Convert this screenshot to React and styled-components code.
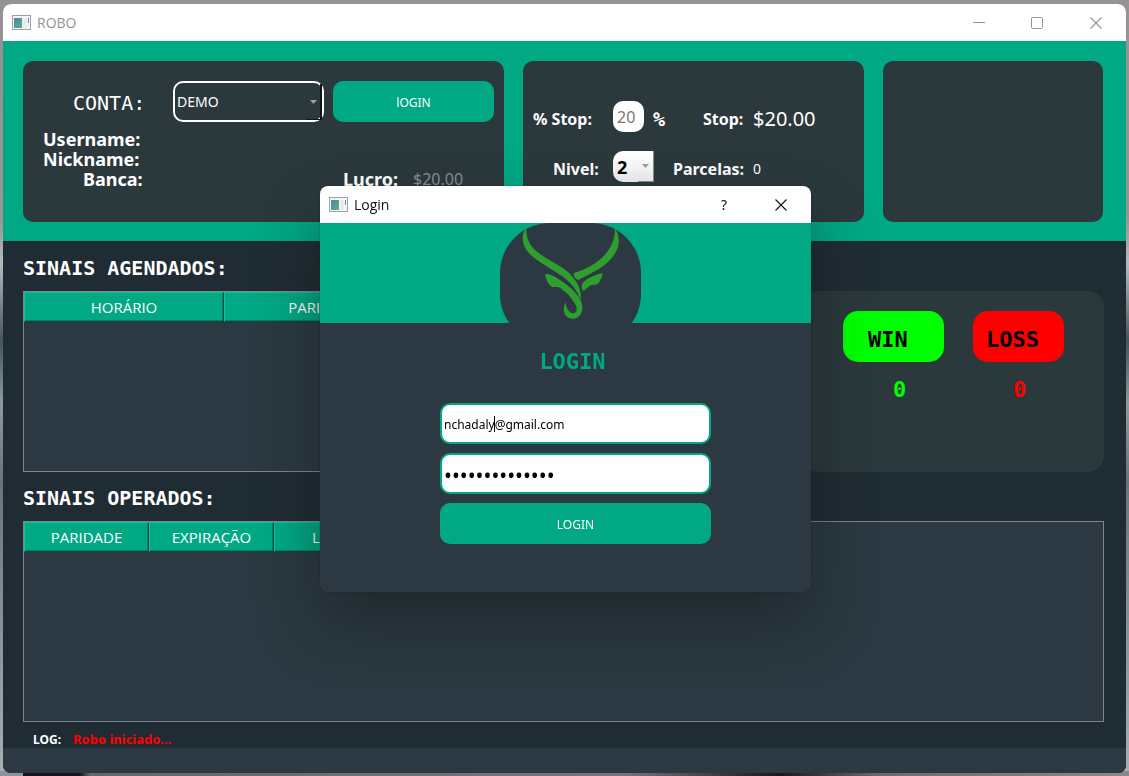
import React from "react";
import styled, { createGlobalStyle, css } from "styled-components";

const green = "#00a884";
const slate = "#2c3942";
const night = "#202c33";
const card = "#2b393d";
const sans = `"Noto Sans", "Open Sans", sans-serif`;
const light = `"Open Sans", "Noto Sans", sans-serif`;
const mono = `"DejaVu Sans Mono", "Liberation Mono", monospace`;

const GlobalStyle = createGlobalStyle`
  *, *::before, *::after { box-sizing: border-box; }
  html, body { height: 100%; }
  body {
    margin: 0;
    color: #fff;
    font-family: ${sans};
    background:
      linear-gradient(90deg, #8e9495 0, #8e9495 2%, #15121a 2%, #15121a 7%, #666 8%, #77757a 55%, #1a1818 69%, #6c6a6a 78%, #8c8888 100%) bottom / 100% 5px no-repeat,
      linear-gradient(180deg, #979393 0, #999494 28%, #b4babb 34%, #46535a 44%, #8d9a9d 52%, #6a7476 62%, #a9afb1 100%);
  }
  button, input, select { font: inherit; margin: 0; }
  h1, h2, p, dl, dd, dt { margin: 0; font-weight: inherit; font-size: inherit; }
`;

const Desktop = styled.div`
  display: flex;
  min-height: 100vh;
  padding: 4px 3px 3px;
`;

const Window = styled.main`
  flex: 1;
  min-width: 0;
  display: flex;
  flex-direction: column;
  border-radius: 8px;
  overflow: hidden;
  background: ${night};
`;

const TitleBar = styled.header`
  display: flex;
  align-items: center;
  height: 37px;
  flex: none;
  padding-left: 9px;
  background: #fff;
  color: ${(p) => (p.$active ? "#111" : "#929292")};
  font: 14px/20px ${light};
`;

const Title = styled.h1`
  flex: 1;
  padding-left: 6px;
`;

const CaptionButton = styled.button`
  display: flex;
  align-items: center;
  justify-content: center;
  width: ${(p) => p.$width || 58}px;
  height: 100%;
  padding: 0;
  border: 0;
  background: none;
  color: inherit;
  font: 14px/20px ${sans};
`;

const TopBand = styled.section`
  display: grid;
  grid-template-columns: 481fr 341fr 220fr;
  gap: 19px;
  height: 200px;
  flex: none;
  padding: 20px 23px 19px 20px;
  background: ${green};
`;

const Card = styled.div`
  background: ${card};
  border-radius: 10px;
  min-width: 0;
`;

const AccountCard = styled(Card)`
  padding: 20px 10px 0 20px;
`;

const StopCard = styled(Card)`
  display: flex;
  flex-direction: column;
  gap: 19px;
  padding: 40px 10px 0;
`;

const AccountRow = styled.div`
  display: flex;
  gap: 9px;
  height: 41px;
  padding-left: 30px;
  margin-bottom: 7px;
`;

const MonoLabel = styled.label`
  width: 91px;
  font: 20px/44px ${mono};
`;

const SelectBox = styled.div`
  position: relative;
  display: flex;
  width: ${(p) => p.$width}px;
  height: ${(p) => p.$height}px;
`;

const AccountSelect = styled.select`
  appearance: none;
  width: 100%;
  padding: 0 2px;
  border: 2px solid #fff;
  border-radius: 10px;
  background: ${card};
  color: #fff;
  font: 14px/20px ${sans};
`;

const ArrowPad = styled.span`
  position: absolute;
  top: 3px;
  right: 2px;
  bottom: 2px;
  width: 16px;
  display: flex;
  align-items: center;
  justify-content: center;
  pointer-events: none;
  border-left: 1px solid #27343a;
  border-right: 2px solid #0e1518;
  border-bottom: 1px solid #0e1518;
  ${(p) =>
    p.$light &&
    css`
      top: 0;
      right: 0;
      bottom: 0;
      border-left: 0;
      border-right: 1px solid #8c8c90;
      border-bottom: 1px solid #8c8c90;
    `}
`;

const LevelSelect = styled.select`
  appearance: none;
  width: 100%;
  padding: 0 4px;
  border: 0;
  border-radius: 10px 0 0 10px;
  background: linear-gradient(#fff, #f0f0f2);
  color: #000;
  font: bold 18px/24px ${sans};
`;

const GreenButton = styled.button`
  flex: ${(p) => (p.$grow ? 1 : "none")};
  height: 41px;
  padding: 2px 0 0;
  border: 0;
  border-radius: 10px;
  background: ${green};
  color: #fff;
  font: 12px/20px ${sans};
`;

const Facts = styled.dl`
  font: bold 18px/20px ${sans};
`;

const Fact = styled.div`
  display: flex;
  height: 20px;
  padding-left: ${(p) => p.$indent || 0}px;
`;

const Profit = styled.div`
  display: flex;
  margin-left: 198px;
`;

const FactName = styled.dt`
  width: ${(p) => (p.$wide ? 62 : 70)}px;
`;

const FactValue = styled.dd`
  font-weight: normal;
  font-size: 16px;
  color: #8a8d8f;
`;

const StopRow = styled.div`
  display: flex;
  align-items: center;
  height: 31px;
`;

const Cell = styled.span`
  width: ${(p) => p.$width}px;
  flex: none;
  padding: 4px 0 0 ${(p) => p.$indent || 0}px;
  font: bold 16px/20px ${sans};
`;

const PercentSign = styled(Cell)`
  font: bold 20px/20px ${mono};
`;

const Amount = styled.output`
  padding-top: 4px;
  font-size: ${(p) => (p.$large ? 20 : 14)}px;
  line-height: 20px;
`;

const PercentInput = styled.input`
  width: 31px;
  height: 31px;
  margin-right: 9px;
  padding: 0 4px;
  border: 0;
  border-radius: 10px;
  background: #fff;
  color: #777;
  font: 16px/24px ${sans};
`;

const Body = styled.section`
  flex: 1;
  display: flex;
  flex-direction: column;
  padding: 0 22px 0 20px;
`;

const SectionTitle = styled.h2`
  flex: none;
  height: 50px;
  padding-top: 5px;
  font: bold 20px/44px ${mono};
`;

const Row = styled.div`
  display: flex;
  gap: 20px;
  height: 181px;
  flex: none;
  margin-bottom: -1px;
`;

const TableFrame = styled.div`
  flex: 1;
  min-width: 0;
  min-height: ${(p) => p.$minHeight || 0}px;
  overflow: hidden;
  border: 1px solid #7b868c;
  background: ${slate};
`;

const Table = styled.table`
  border-collapse: separate;
  border-spacing: 0;
  table-layout: fixed;
  width: ${(p) => p.$width}px;
`;

const HeadCell = styled.th`
  height: 30px;
  padding: 0;
  border: 1px solid;
  border-color: #0fc39c #06483c #06483c #0fc39c;
  background: ${green};
  box-shadow: inset -1px -1px #028268;
  font: 15px/20px ${light};
  text-align: center;
`;

const Score = styled.div`
  display: flex;
  gap: 29px;
  width: 301px;
  flex: none;
  padding: 20px 0 0 40px;
  border-radius: 16px;
  background: ${card};
  font: bold 22px/26px ${mono};
`;

const ScoreColumn = styled.dl`
  width: ${(p) => p.$width}px;
  color: ${(p) => p.$color};
`;

const Badge = styled.dt`
  height: 51px;
  padding: 16px 0 0 ${(p) => p.$indent}px;
  border-radius: 15px;
  background: ${(p) => p.$color};
  color: #000;
`;

const Count = styled.dd`
  padding: 15px 0 0 ${(p) => p.$indent}px;
`;

const LogLine = styled.p`
  display: flex;
  gap: 12px;
  padding: 9px 10px 0;
  height: 26px;
  flex: none;
  font: bold 12px/18px ${sans};
`;

const LogText = styled.span`
  color: #f00;
  font-size: 13px;
  line-height: 16px;
`;

const StatusBar = styled.footer`
  height: 25px;
  flex: none;
  background: ${slate};
`;

const Overlay = styled.div`
  position: fixed;
  inset: 0;
  display: flex;
  align-items: center;
  justify-content: center;
  padding: 2px 0 0 2px;
`;

const Dialog = styled.div`
  width: 491px;
  height: 406px;
  border-radius: 8px;
  overflow: hidden;
  background: ${slate};
  box-shadow: 0 30px 60px rgba(16, 24, 24, 0.46), 0 0 2px rgba(0, 0, 0, 0.3);
`;

const Banner = styled.div`
  display: flex;
  justify-content: center;
  height: 100px;
  overflow: hidden;
  background: ${green};
`;

const LogoPlate = styled.div`
  width: 141px;
  height: 121px;
  margin-left: 10px;
  border-radius: 50px;
  background: ${slate};
`;

const Form = styled.form`
  display: flex;
  flex-direction: column;
  gap: 9px;
  padding: 24px 100px 0 120px;
`;

const FormTitle = styled.h2`
  margin-bottom: 18px;
  padding-right: 6px;
  text-align: center;
  color: ${green};
  font: bold 22px/29px ${mono};
`;

const Field = styled.div`
  position: relative;
  display: flex;
`;

const TextInput = styled.input`
  width: 100%;
  height: 41px;
  padding: 2px 2px 0;
  border: 2px solid ${green};
  border-radius: 10px;
  background: #fff;
  color: #000;
  outline: 0;
  font: 12px/20px ${sans};

  &[type="password"] {
    font-size: 21px;
  }
`;

const Caret = styled.span`
  position: absolute;
  left: 54px;
  top: 13px;
  width: 1px;
  height: 16px;
  background: #000;
`;

function AppIcon() {
  return (
    <svg width="19" height="15" viewBox="0 0 19 15" aria-hidden="true">
      <defs>
        <linearGradient id="pane" x1="0" y1="0" x2="1" y2="1">
          <stop offset="0" stopColor="#4a86a8" />
          <stop offset="1" stopColor="#5fae84" />
        </linearGradient>
      </defs>
      <rect x="0.5" y="0.5" width="18" height="14" fill="#f4f5f6" stroke="#9ba1a8" />
      <rect x="2" y="3" width="8" height="10" fill="url(#pane)" />
      <rect x="11" y="3" width="4" height="10" fill="#e9ebed" />
      <rect x="16" y="3" width="1" height="5" fill="#5a97a0" />
    </svg>
  );
}

function CloseIcon() {
  return (
    <svg width="12" height="12" viewBox="0 0 12 12" aria-hidden="true">
      <path d="M0.5 0.5L11.5 11.5M11.5 0.5L0.5 11.5" stroke="currentColor" strokeWidth="1.1" />
    </svg>
  );
}

function Arrow() {
  return (
    <svg width="7" height="4" viewBox="0 0 7 4" aria-hidden="true">
      <path d="M0 0H7L3.5 4Z" fill="#9c9fa3" />
    </svg>
  );
}

function BullLogo() {
  return (
    <svg width="141" height="121" viewBox="0 0 141 121" role="img" aria-label="Logo" fill="#2f9e2f">
      <path d="M26.4 4.7C22 10 21.300 17 25 24.500C29 32 36 36.500 43 41C50 45.500 58 50 64 54.500C71 60 76.500 67 80.800 76.500C81.500 70 79.500 63.500 76 58.500C72.500 53 68 48 62 44.500C53 39 41 33 34 26C28 20 26 12 26.400 4.700Z" />
      <path d="M114.700 4.700C119 11 120 19 117 26.500C114 34 107.500 40.500 100 45.300C93 49.500 86 53 78.300 57C75.500 56 74 54 73.700 52C73.500 50 75 49.400 77 49C85 46.500 93 42 100 36.500C108 30 116 18 114.700 4.700Z" />
      <path d="M45 51C49 51 53 52.200 57 55C65 60 73 66 78 73C81 77 82.800 81.500 82.300 86C81.500 92 78 95.700 73 95.700C67 95.700 63.800 91.500 63.800 87C63.800 84 64.500 81.500 65.700 79.300C66 84 67.500 87.500 70 89.300C72 90.800 75 90.500 76.300 88.500C77.300 86.500 76.500 83 74.500 80C70.500 73 65 68.500 60 64.800C57 62.800 54.500 65 51.500 63.500C48 61.500 46 56 45 51Z" />
      <path d="M102.700 50C102 54 100.500 58 98 60.500C96 62.500 93.500 61 91 62.300C88 64 86 66 83.300 68.300C81.800 66.500 81.300 63.500 82 61C85 56 94 52 102.700 50Z" />
    </svg>
  );
}

function SignalTable({ width, columns }) {
  return (
    <Table $width={width}>
      <thead>
        <tr>
          {columns.map((name) => (
            <HeadCell key={name} scope="col">{name}</HeadCell>
          ))}
        </tr>
      </thead>
    </Table>
  );
}

function LoginDialog() {
  return (
    <Overlay>
      <Dialog role="dialog" aria-label="Login">
        <TitleBar $active>
          <AppIcon />
          <Title>Login</Title>
          <CaptionButton type="button" $width={54}>?</CaptionButton>
          <CaptionButton type="button" $width={60} aria-label="Close"><CloseIcon /></CaptionButton>
        </TitleBar>
        <Banner>
          <LogoPlate><BullLogo /></LogoPlate>
        </Banner>
        <Form onSubmit={(e) => e.preventDefault()}>
          <FormTitle>LOGIN</FormTitle>
          <Field>
            <TextInput type="text" aria-label="E-mail" defaultValue="nchadaly@gmail.com" />
            <Caret />
          </Field>
          <Field>
            <TextInput type="password" aria-label="Senha" defaultValue="12345678901234" />
          </Field>
          <GreenButton type="submit">LOGIN</GreenButton>
        </Form>
      </Dialog>
    </Overlay>
  );
}

export default function App() {
  return (
    <>
      <GlobalStyle />
      <Desktop>
        <Window>
          <TitleBar>
            <AppIcon />
            <Title>ROBO</Title>
            <CaptionButton type="button" aria-label="Minimize">
              <svg width="12" height="12" viewBox="0 0 12 12"><path d="M0 5.500H12" stroke="currentColor" /></svg>
            </CaptionButton>
            <CaptionButton type="button" aria-label="Maximize">
              <svg width="12" height="12" viewBox="0 0 12 12"><rect x="0.500" y="0.500" width="11" height="11" rx="1" fill="none" stroke="currentColor" /></svg>
            </CaptionButton>
            <CaptionButton type="button" $width={60} aria-label="Close"><CloseIcon /></CaptionButton>
          </TitleBar>

          <TopBand>
            <AccountCard>
              <AccountRow>
                <MonoLabel htmlFor="conta">CONTA:</MonoLabel>
                <SelectBox $width={151} $height={41}>
                  <AccountSelect id="conta"><option>DEMO</option></AccountSelect>
                  <ArrowPad><Arrow /></ArrowPad>
                </SelectBox>
                <GreenButton type="button" $grow>lOGIN</GreenButton>
              </AccountRow>
              <Facts>
                <Fact><dt>Username:</dt></Fact>
                <Fact><dt>Nickname:</dt></Fact>
                <Fact $indent={40}>
                  <FactName $wide>Banca:</FactName>
                  <Profit>
                    <FactName>Lucro:</FactName>
                    <FactValue>$20.00</FactValue>
                  </Profit>
                </Fact>
              </Facts>
            </AccountCard>

            <StopCard>
              <StopRow>
                <Cell as="label" htmlFor="stop" $width={80}>% Stop:</Cell>
                <PercentInput id="stop" defaultValue="20" />
                <PercentSign $width={50}>%</PercentSign>
                <Cell $width={50}>Stop:</Cell>
                <Amount $large>$20.00</Amount>
              </StopRow>
              <StopRow>
                <Cell as="label" htmlFor="nivel" $width={80} $indent={20}>Nivel:</Cell>
                <SelectBox $width={41} $height={31}>
                  <LevelSelect id="nivel"><option>2</option></LevelSelect>
                  <ArrowPad $light><Arrow /></ArrowPad>
                </SelectBox>
                <Cell $width={99} $indent={19}>Parcelas:</Cell>
                <Amount>0</Amount>
              </StopRow>
            </StopCard>

            <Card />
          </TopBand>

          <Body>
            <SectionTitle>SINAIS AGENDADOS:</SectionTitle>
            <Row>
              <TableFrame>
                <SignalTable width={400} columns={["HORÁRIO", "PARIDADE"]} />
              </TableFrame>
              <Score>
                <ScoreColumn $width={101} $color="#0f0">
                  <Badge $color="#0f0" $indent={25}>WIN</Badge>
                  <Count $indent={50}>0</Count>
                </ScoreColumn>
                <ScoreColumn $width={91} $color="#f00">
                  <Badge $color="#f00" $indent={13}>LOSS</Badge>
                  <Count $indent={40}>0</Count>
                </ScoreColumn>
              </Score>
            </Row>
            <SectionTitle>SINAIS OPERADOS:</SectionTitle>
            <TableFrame $minHeight={201}>
              <SignalTable width={375} columns={["PARIDADE", "EXPIRAÇÃO", "LUCRO"]} />
            </TableFrame>
            <LogLine><span>LOG:</span><LogText>Robo iniciado...</LogText></LogLine>
          </Body>
          <StatusBar />
        </Window>
      </Desktop>
      <LoginDialog />
    </>
  );
}
